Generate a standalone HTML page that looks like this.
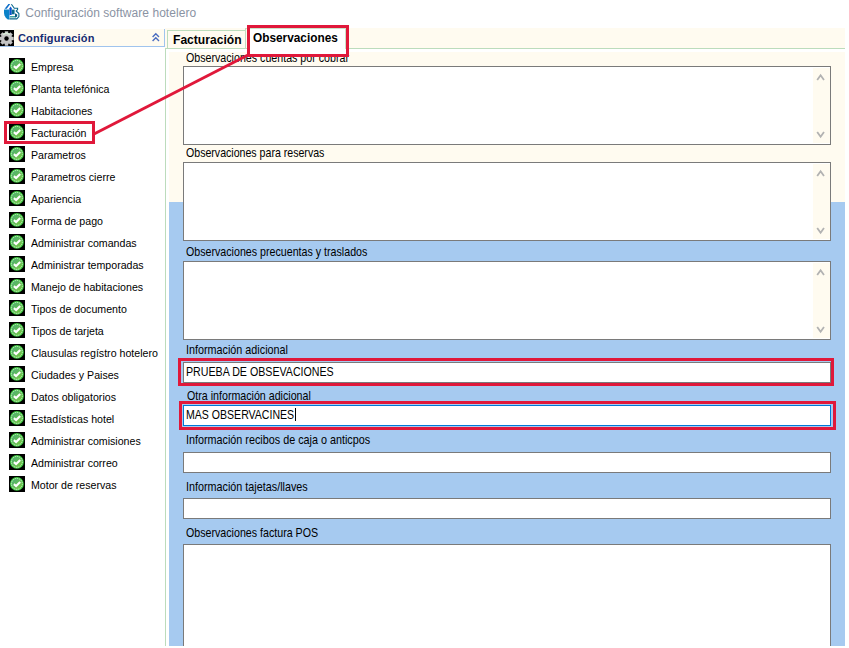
<!DOCTYPE html>
<html><head><meta charset="utf-8">
<style>
*{margin:0;padding:0;box-sizing:border-box}
html,body{width:849px;height:648px;overflow:hidden;background:#fff;font-family:"Liberation Sans",sans-serif}
.a{position:absolute}
.lbl{position:absolute;font-size:13px;line-height:13px;color:#000;white-space:nowrap;transform-origin:0 0;transform:scaleX(0.83)}
.it{position:absolute;left:31px;font-size:11px;line-height:11px;color:#000;white-space:nowrap;transform-origin:0 0;transform:scaleX(0.965)}
.ic{position:absolute;left:9px;width:16px;height:16px;background:#000}
.box{position:absolute;background:#fff;border:1px solid #7a7a7a}
.sb{position:absolute;background:#fffbf0}
.red{position:absolute;border:3px solid #e0183a}
</style></head><body>
<!-- title -->
<svg class="a" style="left:0;top:0" width="24" height="24" viewBox="0 0 24 24">
 <path d="M4 9.5 L9.5 9.5 L9.5 19.5 L7.8 19.5 L5.8 17.8 L4.5 15.5 L4 13 Z" fill="#0b82c8"/>
 <path d="M4.6 8.8 L8.4 4 L10.2 4 L6.8 8.8 Z" fill="#0a6cc8"/>
 <path d="M9.5 15 L9.5 8.2 L10.6 6.6 L11.7 8.2 L11.7 15 Z" fill="#0a52d0"/>
 <path d="M11.7 9.6 L14.6 9.6 L14.6 14.3 L11.7 14.3 Z" fill="#0b6a8c"/>
 <path d="M11.4 4.2 L14.3 8.3 L17.6 8.3 L17.6 9.6 L16.2 11 L18.9 13.6 L18.9 16.6 L16.8 18.9 L9.6 18.9" fill="none" stroke="#0b6a8c" stroke-width="1.1"/>
 <rect x="10" y="16.2" width="5.2" height="1.2" fill="#118a8a"/>
 <path d="M15 13.2 L17.2 14.6 L17.2 16.6 L15.6 17.6 L15 17.6 Z" fill="#0a5a80"/>
</svg>
<div class="a" style="left:25.2px;top:7px;font-size:12px;line-height:12px;letter-spacing:0.05px;color:#8a93a3;white-space:nowrap">Configuración software hotelero</div>

<!-- sidebar header -->
<div class="a" style="left:0;top:30px;width:14px;height:16px;background:#000"></div>
<svg class="a" style="left:-1.5px;top:30.5px" width="15" height="15" viewBox="0 0 15 15">
 <g fill="#c4c4c4">
 <circle cx="7.5" cy="7.5" r="5.6"/>
 <rect x="5.8" y="0.3" width="3.4" height="14.4"/>
 <rect x="0.3" y="5.8" width="14.4" height="3.4"/>
 <rect x="5.8" y="0.3" width="3.4" height="14.4" transform="rotate(45 7.5 7.5)"/>
 <rect x="5.8" y="0.3" width="3.4" height="14.4" transform="rotate(-45 7.5 7.5)"/>
 </g>
 <path d="M4 3.5 L7.5 2 L11 3.5" fill="none" stroke="#d8ecd8" stroke-width="1.5"/>
 <circle cx="7.5" cy="7.5" r="2.2" fill="#000"/>
</svg>
<div class="a" style="left:14px;top:29px;width:151px;height:18px;background:#fffbf0;border-right:1px solid #a0c4ee;border-bottom:1px solid #a0c4ee"></div>
<div class="a" style="left:0;top:46px;width:14px;height:1px;background:#a0c4ee"></div>
<div class="a" style="left:18px;top:33px;font-size:11px;line-height:11px;letter-spacing:0.15px;font-weight:bold;color:#152b72;white-space:nowrap">Configuración</div>
<svg class="a" style="left:151px;top:32px" width="10" height="10" viewBox="0 0 10 10">
 <path d="M1.6 5 L4.8 1.8 L8 5 M1.6 9 L4.8 5.8 L8 9" fill="none" stroke="#4a6cc0" stroke-width="1.4"/>
</svg>

<!-- items -->
<svg class="ic" style="top:58px" width="16" height="16" viewBox="0 0 16 16"><defs><linearGradient id="g0" x1="0" y1="0" x2="1" y2="1"><stop offset="0" stop-color="#4aae78"/><stop offset="1" stop-color="#78c83a"/></linearGradient></defs><rect width="16" height="16" fill="#000"/><circle cx="7.9" cy="7.9" r="6.9" fill="#3cc83c"/><circle cx="7.9" cy="7.9" r="5.5" fill="url(#g0)" stroke="#d8f2d8" stroke-width="0.9" stroke-dasharray="1.4 0.7"/><path d="M4.9 8.1 L7.1 10.1 L11.2 5.9" fill="none" stroke="#fff" stroke-width="2.1"/></svg>
<div class="it" style="top:62px">Empresa</div>
<svg class="ic" style="top:80px" width="16" height="16" viewBox="0 0 16 16"><defs><linearGradient id="g1" x1="0" y1="0" x2="1" y2="1"><stop offset="0" stop-color="#4aae78"/><stop offset="1" stop-color="#78c83a"/></linearGradient></defs><rect width="16" height="16" fill="#000"/><circle cx="7.9" cy="7.9" r="6.9" fill="#3cc83c"/><circle cx="7.9" cy="7.9" r="5.5" fill="url(#g1)" stroke="#d8f2d8" stroke-width="0.9" stroke-dasharray="1.4 0.7"/><path d="M4.9 8.1 L7.1 10.1 L11.2 5.9" fill="none" stroke="#fff" stroke-width="2.1"/></svg>
<div class="it" style="top:84px">Planta telefónica</div>
<svg class="ic" style="top:102px" width="16" height="16" viewBox="0 0 16 16"><defs><linearGradient id="g2" x1="0" y1="0" x2="1" y2="1"><stop offset="0" stop-color="#4aae78"/><stop offset="1" stop-color="#78c83a"/></linearGradient></defs><rect width="16" height="16" fill="#000"/><circle cx="7.9" cy="7.9" r="6.9" fill="#3cc83c"/><circle cx="7.9" cy="7.9" r="5.5" fill="url(#g2)" stroke="#d8f2d8" stroke-width="0.9" stroke-dasharray="1.4 0.7"/><path d="M4.9 8.1 L7.1 10.1 L11.2 5.9" fill="none" stroke="#fff" stroke-width="2.1"/></svg>
<div class="it" style="top:106px">Habitaciones</div>
<svg class="ic" style="top:124px" width="16" height="16" viewBox="0 0 16 16"><defs><linearGradient id="g3" x1="0" y1="0" x2="1" y2="1"><stop offset="0" stop-color="#4aae78"/><stop offset="1" stop-color="#78c83a"/></linearGradient></defs><rect width="16" height="16" fill="#000"/><circle cx="7.9" cy="7.9" r="6.9" fill="#3cc83c"/><circle cx="7.9" cy="7.9" r="5.5" fill="url(#g3)" stroke="#d8f2d8" stroke-width="0.9" stroke-dasharray="1.4 0.7"/><path d="M4.9 8.1 L7.1 10.1 L11.2 5.9" fill="none" stroke="#fff" stroke-width="2.1"/></svg>
<div class="it" style="top:128px">Facturación</div>
<svg class="ic" style="top:146px" width="16" height="16" viewBox="0 0 16 16"><defs><linearGradient id="g4" x1="0" y1="0" x2="1" y2="1"><stop offset="0" stop-color="#4aae78"/><stop offset="1" stop-color="#78c83a"/></linearGradient></defs><rect width="16" height="16" fill="#000"/><circle cx="7.9" cy="7.9" r="6.9" fill="#3cc83c"/><circle cx="7.9" cy="7.9" r="5.5" fill="url(#g4)" stroke="#d8f2d8" stroke-width="0.9" stroke-dasharray="1.4 0.7"/><path d="M4.9 8.1 L7.1 10.1 L11.2 5.9" fill="none" stroke="#fff" stroke-width="2.1"/></svg>
<div class="it" style="top:150px">Parametros</div>
<svg class="ic" style="top:168px" width="16" height="16" viewBox="0 0 16 16"><defs><linearGradient id="g5" x1="0" y1="0" x2="1" y2="1"><stop offset="0" stop-color="#4aae78"/><stop offset="1" stop-color="#78c83a"/></linearGradient></defs><rect width="16" height="16" fill="#000"/><circle cx="7.9" cy="7.9" r="6.9" fill="#3cc83c"/><circle cx="7.9" cy="7.9" r="5.5" fill="url(#g5)" stroke="#d8f2d8" stroke-width="0.9" stroke-dasharray="1.4 0.7"/><path d="M4.9 8.1 L7.1 10.1 L11.2 5.9" fill="none" stroke="#fff" stroke-width="2.1"/></svg>
<div class="it" style="top:172px">Parametros cierre</div>
<svg class="ic" style="top:190px" width="16" height="16" viewBox="0 0 16 16"><defs><linearGradient id="g6" x1="0" y1="0" x2="1" y2="1"><stop offset="0" stop-color="#4aae78"/><stop offset="1" stop-color="#78c83a"/></linearGradient></defs><rect width="16" height="16" fill="#000"/><circle cx="7.9" cy="7.9" r="6.9" fill="#3cc83c"/><circle cx="7.9" cy="7.9" r="5.5" fill="url(#g6)" stroke="#d8f2d8" stroke-width="0.9" stroke-dasharray="1.4 0.7"/><path d="M4.9 8.1 L7.1 10.1 L11.2 5.9" fill="none" stroke="#fff" stroke-width="2.1"/></svg>
<div class="it" style="top:194px">Apariencia</div>
<svg class="ic" style="top:212px" width="16" height="16" viewBox="0 0 16 16"><defs><linearGradient id="g7" x1="0" y1="0" x2="1" y2="1"><stop offset="0" stop-color="#4aae78"/><stop offset="1" stop-color="#78c83a"/></linearGradient></defs><rect width="16" height="16" fill="#000"/><circle cx="7.9" cy="7.9" r="6.9" fill="#3cc83c"/><circle cx="7.9" cy="7.9" r="5.5" fill="url(#g7)" stroke="#d8f2d8" stroke-width="0.9" stroke-dasharray="1.4 0.7"/><path d="M4.9 8.1 L7.1 10.1 L11.2 5.9" fill="none" stroke="#fff" stroke-width="2.1"/></svg>
<div class="it" style="top:216px">Forma de pago</div>
<svg class="ic" style="top:234px" width="16" height="16" viewBox="0 0 16 16"><defs><linearGradient id="g8" x1="0" y1="0" x2="1" y2="1"><stop offset="0" stop-color="#4aae78"/><stop offset="1" stop-color="#78c83a"/></linearGradient></defs><rect width="16" height="16" fill="#000"/><circle cx="7.9" cy="7.9" r="6.9" fill="#3cc83c"/><circle cx="7.9" cy="7.9" r="5.5" fill="url(#g8)" stroke="#d8f2d8" stroke-width="0.9" stroke-dasharray="1.4 0.7"/><path d="M4.9 8.1 L7.1 10.1 L11.2 5.9" fill="none" stroke="#fff" stroke-width="2.1"/></svg>
<div class="it" style="top:238px">Administrar comandas</div>
<svg class="ic" style="top:256px" width="16" height="16" viewBox="0 0 16 16"><defs><linearGradient id="g9" x1="0" y1="0" x2="1" y2="1"><stop offset="0" stop-color="#4aae78"/><stop offset="1" stop-color="#78c83a"/></linearGradient></defs><rect width="16" height="16" fill="#000"/><circle cx="7.9" cy="7.9" r="6.9" fill="#3cc83c"/><circle cx="7.9" cy="7.9" r="5.5" fill="url(#g9)" stroke="#d8f2d8" stroke-width="0.9" stroke-dasharray="1.4 0.7"/><path d="M4.9 8.1 L7.1 10.1 L11.2 5.9" fill="none" stroke="#fff" stroke-width="2.1"/></svg>
<div class="it" style="top:260px">Administrar temporadas</div>
<svg class="ic" style="top:278px" width="16" height="16" viewBox="0 0 16 16"><defs><linearGradient id="g10" x1="0" y1="0" x2="1" y2="1"><stop offset="0" stop-color="#4aae78"/><stop offset="1" stop-color="#78c83a"/></linearGradient></defs><rect width="16" height="16" fill="#000"/><circle cx="7.9" cy="7.9" r="6.9" fill="#3cc83c"/><circle cx="7.9" cy="7.9" r="5.5" fill="url(#g10)" stroke="#d8f2d8" stroke-width="0.9" stroke-dasharray="1.4 0.7"/><path d="M4.9 8.1 L7.1 10.1 L11.2 5.9" fill="none" stroke="#fff" stroke-width="2.1"/></svg>
<div class="it" style="top:282px">Manejo de habitaciones</div>
<svg class="ic" style="top:300px" width="16" height="16" viewBox="0 0 16 16"><defs><linearGradient id="g11" x1="0" y1="0" x2="1" y2="1"><stop offset="0" stop-color="#4aae78"/><stop offset="1" stop-color="#78c83a"/></linearGradient></defs><rect width="16" height="16" fill="#000"/><circle cx="7.9" cy="7.9" r="6.9" fill="#3cc83c"/><circle cx="7.9" cy="7.9" r="5.5" fill="url(#g11)" stroke="#d8f2d8" stroke-width="0.9" stroke-dasharray="1.4 0.7"/><path d="M4.9 8.1 L7.1 10.1 L11.2 5.9" fill="none" stroke="#fff" stroke-width="2.1"/></svg>
<div class="it" style="top:304px">Tipos de documento</div>
<svg class="ic" style="top:322px" width="16" height="16" viewBox="0 0 16 16"><defs><linearGradient id="g12" x1="0" y1="0" x2="1" y2="1"><stop offset="0" stop-color="#4aae78"/><stop offset="1" stop-color="#78c83a"/></linearGradient></defs><rect width="16" height="16" fill="#000"/><circle cx="7.9" cy="7.9" r="6.9" fill="#3cc83c"/><circle cx="7.9" cy="7.9" r="5.5" fill="url(#g12)" stroke="#d8f2d8" stroke-width="0.9" stroke-dasharray="1.4 0.7"/><path d="M4.9 8.1 L7.1 10.1 L11.2 5.9" fill="none" stroke="#fff" stroke-width="2.1"/></svg>
<div class="it" style="top:326px">Tipos de tarjeta</div>
<svg class="ic" style="top:344px" width="16" height="16" viewBox="0 0 16 16"><defs><linearGradient id="g13" x1="0" y1="0" x2="1" y2="1"><stop offset="0" stop-color="#4aae78"/><stop offset="1" stop-color="#78c83a"/></linearGradient></defs><rect width="16" height="16" fill="#000"/><circle cx="7.9" cy="7.9" r="6.9" fill="#3cc83c"/><circle cx="7.9" cy="7.9" r="5.5" fill="url(#g13)" stroke="#d8f2d8" stroke-width="0.9" stroke-dasharray="1.4 0.7"/><path d="M4.9 8.1 L7.1 10.1 L11.2 5.9" fill="none" stroke="#fff" stroke-width="2.1"/></svg>
<div class="it" style="top:348px">Clausulas regístro hotelero</div>
<svg class="ic" style="top:366px" width="16" height="16" viewBox="0 0 16 16"><defs><linearGradient id="g14" x1="0" y1="0" x2="1" y2="1"><stop offset="0" stop-color="#4aae78"/><stop offset="1" stop-color="#78c83a"/></linearGradient></defs><rect width="16" height="16" fill="#000"/><circle cx="7.9" cy="7.9" r="6.9" fill="#3cc83c"/><circle cx="7.9" cy="7.9" r="5.5" fill="url(#g14)" stroke="#d8f2d8" stroke-width="0.9" stroke-dasharray="1.4 0.7"/><path d="M4.9 8.1 L7.1 10.1 L11.2 5.9" fill="none" stroke="#fff" stroke-width="2.1"/></svg>
<div class="it" style="top:370px">Ciudades y Paises</div>
<svg class="ic" style="top:388px" width="16" height="16" viewBox="0 0 16 16"><defs><linearGradient id="g15" x1="0" y1="0" x2="1" y2="1"><stop offset="0" stop-color="#4aae78"/><stop offset="1" stop-color="#78c83a"/></linearGradient></defs><rect width="16" height="16" fill="#000"/><circle cx="7.9" cy="7.9" r="6.9" fill="#3cc83c"/><circle cx="7.9" cy="7.9" r="5.5" fill="url(#g15)" stroke="#d8f2d8" stroke-width="0.9" stroke-dasharray="1.4 0.7"/><path d="M4.9 8.1 L7.1 10.1 L11.2 5.9" fill="none" stroke="#fff" stroke-width="2.1"/></svg>
<div class="it" style="top:392px">Datos obligatorios</div>
<svg class="ic" style="top:410px" width="16" height="16" viewBox="0 0 16 16"><defs><linearGradient id="g16" x1="0" y1="0" x2="1" y2="1"><stop offset="0" stop-color="#4aae78"/><stop offset="1" stop-color="#78c83a"/></linearGradient></defs><rect width="16" height="16" fill="#000"/><circle cx="7.9" cy="7.9" r="6.9" fill="#3cc83c"/><circle cx="7.9" cy="7.9" r="5.5" fill="url(#g16)" stroke="#d8f2d8" stroke-width="0.9" stroke-dasharray="1.4 0.7"/><path d="M4.9 8.1 L7.1 10.1 L11.2 5.9" fill="none" stroke="#fff" stroke-width="2.1"/></svg>
<div class="it" style="top:414px">Estadísticas hotel</div>
<svg class="ic" style="top:432px" width="16" height="16" viewBox="0 0 16 16"><defs><linearGradient id="g17" x1="0" y1="0" x2="1" y2="1"><stop offset="0" stop-color="#4aae78"/><stop offset="1" stop-color="#78c83a"/></linearGradient></defs><rect width="16" height="16" fill="#000"/><circle cx="7.9" cy="7.9" r="6.9" fill="#3cc83c"/><circle cx="7.9" cy="7.9" r="5.5" fill="url(#g17)" stroke="#d8f2d8" stroke-width="0.9" stroke-dasharray="1.4 0.7"/><path d="M4.9 8.1 L7.1 10.1 L11.2 5.9" fill="none" stroke="#fff" stroke-width="2.1"/></svg>
<div class="it" style="top:436px">Administrar comisiones</div>
<svg class="ic" style="top:454px" width="16" height="16" viewBox="0 0 16 16"><defs><linearGradient id="g18" x1="0" y1="0" x2="1" y2="1"><stop offset="0" stop-color="#4aae78"/><stop offset="1" stop-color="#78c83a"/></linearGradient></defs><rect width="16" height="16" fill="#000"/><circle cx="7.9" cy="7.9" r="6.9" fill="#3cc83c"/><circle cx="7.9" cy="7.9" r="5.5" fill="url(#g18)" stroke="#d8f2d8" stroke-width="0.9" stroke-dasharray="1.4 0.7"/><path d="M4.9 8.1 L7.1 10.1 L11.2 5.9" fill="none" stroke="#fff" stroke-width="2.1"/></svg>
<div class="it" style="top:458px">Administrar correo</div>
<svg class="ic" style="top:476px" width="16" height="16" viewBox="0 0 16 16"><defs><linearGradient id="g19" x1="0" y1="0" x2="1" y2="1"><stop offset="0" stop-color="#4aae78"/><stop offset="1" stop-color="#78c83a"/></linearGradient></defs><rect width="16" height="16" fill="#000"/><circle cx="7.9" cy="7.9" r="6.9" fill="#3cc83c"/><circle cx="7.9" cy="7.9" r="5.5" fill="url(#g19)" stroke="#d8f2d8" stroke-width="0.9" stroke-dasharray="1.4 0.7"/><path d="M4.9 8.1 L7.1 10.1 L11.2 5.9" fill="none" stroke="#fff" stroke-width="2.1"/></svg>
<div class="it" style="top:480px">Motor de reservas</div>

<!-- main tab strip -->
<div class="a" style="left:165px;top:28px;width:680px;height:20px;background:#fffbf0"></div>
<div class="a" style="left:167px;top:30px;width:79px;height:19px;border:1px solid #bcdcbc;border-bottom:none;background:#fffbf0"></div>
<div class="a" style="left:173px;top:33px;font-size:13px;line-height:13px;font-weight:bold;white-space:nowrap;transform-origin:0 0;transform:scaleX(0.93)">Facturación</div>
<div class="a" style="left:165px;top:48px;width:680px;height:1px;background:#bcdcbc"></div>
<div class="a" style="left:165px;top:48px;width:1px;height:598px;background:#bcdcbc"></div>
<div class="a" style="left:169px;top:52px;width:676px;height:150px;background:#fffbf0"></div>
<div class="a" style="left:169px;top:202px;width:676px;height:444px;background:#a6caf0"></div>

<!-- textareas -->
<div class="box" style="left:183px;top:66px;width:648px;height:79px"></div>
<div class="box" style="left:183px;top:162px;width:648px;height:79px"></div>
<div class="box" style="left:183px;top:261px;width:648px;height:79px"></div>
<div class="box" style="left:183px;top:544px;width:648px;height:102px;border-bottom:none"></div>
<div class="sb" style="left:813px;top:68px;width:17px;height:75px"></div>
<svg class="a" style="left:816px;top:73px" width="10" height="9" viewBox="0 0 10 9"><path d="M1.2 7 L4.6 2.2 L8 7" fill="none" stroke="#b2b2b2" stroke-width="1.8"/></svg>
<svg class="a" style="left:816px;top:130px" width="10" height="9" viewBox="0 0 10 9"><path d="M1.2 2 L4.6 6.8 L8 2" fill="none" stroke="#b2b2b2" stroke-width="1.8"/></svg>
<div class="sb" style="left:813px;top:164px;width:17px;height:75px"></div>
<svg class="a" style="left:816px;top:169px" width="10" height="9" viewBox="0 0 10 9"><path d="M1.2 7 L4.6 2.2 L8 7" fill="none" stroke="#b2b2b2" stroke-width="1.8"/></svg>
<svg class="a" style="left:816px;top:226px" width="10" height="9" viewBox="0 0 10 9"><path d="M1.2 2 L4.6 6.8 L8 2" fill="none" stroke="#b2b2b2" stroke-width="1.8"/></svg>
<div class="sb" style="left:813px;top:263px;width:17px;height:75px"></div>
<svg class="a" style="left:816px;top:268px" width="10" height="9" viewBox="0 0 10 9"><path d="M1.2 7 L4.6 2.2 L8 7" fill="none" stroke="#b2b2b2" stroke-width="1.8"/></svg>
<svg class="a" style="left:816px;top:325px" width="10" height="9" viewBox="0 0 10 9"><path d="M1.2 2 L4.6 6.8 L8 2" fill="none" stroke="#b2b2b2" stroke-width="1.8"/></svg>

<!-- inputs -->
<div class="box" style="left:183px;top:362px;width:648px;height:21px"></div>
<div class="box" style="left:183px;top:405px;width:648px;height:21px;border-color:#0078d7"></div>
<div class="box" style="left:183px;top:452px;width:648px;height:21px"></div>
<div class="box" style="left:183px;top:498px;width:648px;height:21px"></div>

<!-- labels -->
<div class="lbl" style="left:185.5px;top:51px;transform:scaleX(0.82)">Observaciones cuentas por cobrar</div>
<div class="lbl" style="left:185.5px;top:146px;transform:scaleX(0.815)">Observaciones para reservas</div>
<div class="lbl" style="left:185.5px;top:245px;transform:scaleX(0.82)">Observaciones precuentas y traslados</div>
<div class="lbl" style="left:185.5px;top:343px">Información adicional</div>
<div class="lbl" style="left:186.5px;top:389px;transform:scaleX(0.82)">Otra información adicional</div>
<div class="lbl" style="left:185.5px;top:433px">Información recibos de caja o anticpos</div>
<div class="lbl" style="left:185.5px;top:480px">Información tajetas/llaves</div>
<div class="lbl" style="left:185.5px;top:526px;transform:scaleX(0.82)">Observaciones factura POS</div>
<div class="lbl" style="left:185.5px;top:365px;transform:scaleX(0.819)">PRUEBA DE OBSEVACIONES</div>
<div class="lbl" style="left:186px;top:408px;transform:scaleX(0.812)">MAS OBSERVACINES</div>
<div class="a" style="left:295px;top:408px;width:1px;height:13px;background:#000"></div>

<!-- observaciones tab red box -->
<div class="red" style="left:247px;top:25px;width:102px;height:32px;background:#fff"></div>
<div class="a" style="left:345px;top:28px;width:1px;height:21px;background:#c8e4c8"></div>
<div class="a" style="left:250px;top:28px;width:96px;height:1px;background:#c8e4c8"></div>
<div class="a" style="left:245px;top:28px;width:2px;height:1px;background:#c8e4c8"></div>
<div class="a" style="left:245px;top:28px;width:1px;height:21px;background:#c0dcc0"></div>
<div class="a" style="left:253px;top:31px;font-size:13px;line-height:13px;font-weight:bold;white-space:nowrap;transform-origin:0 0;transform:scaleX(0.91)">Observaciones</div>

<!-- red annotations -->
<div class="red" style="left:4px;top:121px;width:91px;height:23px"></div>
<div class="red" style="left:178px;top:358px;width:656px;height:28px"></div>
<div class="red" style="left:179px;top:401px;width:657px;height:29px"></div>
<svg class="a" style="left:0;top:0" width="849" height="648"><line x1="94" y1="134" x2="248" y2="55" stroke="#e0183a" stroke-width="3"/></svg>
</body></html>
